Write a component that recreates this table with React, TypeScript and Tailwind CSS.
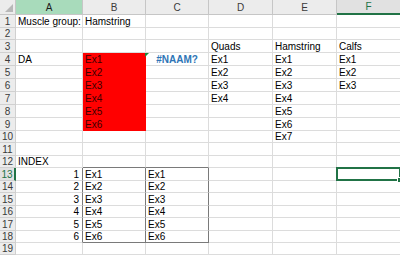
import React from "react";

const COLS = ["A", "B", "C", "D", "E", "F"];
const ROW_COUNT = 19;

type Cell = { text: string; align?: "right" | "center"; tone?: "red" | "error" };

const sheet: Record<string, Cell> = {
  A1: { text: "Muscle group:" },
  B1: { text: "Hamstring" },
  D3: { text: "Quads" },
  E3: { text: "Hamstring" },
  F3: { text: "Calfs" },
  A4: { text: "DA" },
  C4: { text: "#NAAM?", align: "center", tone: "error" },
  A12: { text: "INDEX" },
};

const fillList = (col: string, start: number, count: number, tone?: "red") => {
  for (let i = 0; i < count; i++) {
    sheet[`${col}${start + i}`] = { text: `Ex${i + 1}`, tone };
  }
};

fillList("B", 4, 6, "red");
fillList("D", 4, 4);
fillList("E", 4, 7);
fillList("F", 4, 3);
fillList("B", 13, 6);
fillList("C", 13, 6);
for (let i = 0; i < 6; i++) sheet[`A${13 + i}`] = { text: String(i + 1), align: "right" };

const inBox = (col: string, row: number) => (col === "B" || col === "C") && row >= 13 && row <= 18;

function ColHeader({ col }: { col: string }) {
  if (col === "A") {
    return (
      <div className="flex items-center justify-center border-r border-b border-[#c6c6c6] bg-[#a8dbbb] text-[10px] text-[#1d1d1d]">
        A
      </div>
    );
  }
  if (col === "F") {
    return (
      <div className="flex items-center justify-center border-r border-b-2 border-r-[#c6c6c6] border-b-[#217346] bg-[#e1e1e1] text-[10px] text-[#217346]">
        F
      </div>
    );
  }
  return (
    <div className="flex items-center justify-center border-r border-b border-[#c6c6c6] bg-[#ececec] text-[10px] text-[#3a3a3a]">
      {col}
    </div>
  );
}

function RowHeader({ row }: { row: number }) {
  if (row === 13) {
    return (
      <div className="flex items-center justify-center border-b border-r-2 border-b-[#d0d0d0] border-r-[#217346] bg-[#e1e1e1] text-[10px] text-[#217346]">
        {row}
      </div>
    );
  }
  return (
    <div className="flex items-center justify-center border-r border-b border-[#d0d0d0] bg-[#ececec] text-[10px] text-[#3a3a3a]">
      {row}
    </div>
  );
}

function SheetCell({ col, row }: { col: string; row: number }) {
  const cell = sheet[`${col}${row}`];
  const red = cell?.tone === "red";
  const error = cell?.tone === "error";
  const darkRight = (col === "A" && row >= 13 && row <= 18) || inBox(col, row);
  const darkBottom = (col === "B" || col === "C") && (row === 12 || row === 18);

  let tone = "border-[#dcdcdc] text-black";
  if (red) tone = "border-[#ff0000] bg-[#ff0000] text-[#3a0000]";
  if (error) tone = "border-[#dcdcdc] font-bold text-[#2e75b6]";

  return (
    <div
      className={[
        "relative flex items-end whitespace-nowrap border-r border-b px-[2px] pb-0 text-[10px] leading-[12px]",
        tone,
        darkRight ? "border-r-[#7a7a7a]" : "",
        darkBottom ? "border-b-[#7a7a7a]" : "",
        cell?.align === "right" ? "justify-end pr-[3px]" : "",
        cell?.align === "center" ? "justify-center" : "",
      ].join(" ")}
    >
      {error && (
        <span className="absolute top-0 -left-px h-0 w-0 border-t-[4px] border-r-[4px] border-t-[#1e8a3c] border-r-transparent" />
      )}
      {cell && <span className="translate-y-[1px]">{cell.text}</span>}
      {col === "F" && row === 13 && (
        <span className="absolute -top-px -left-px -right-px -bottom-px border-2 border-[#217346]">
          <span className="absolute -right-[4px] -bottom-[4px] h-[6px] w-[6px] border border-white bg-[#217346]" />
        </span>
      )}
    </div>
  );
}

export default function App() {
  const rows = Array.from({ length: ROW_COUNT }, (_, i) => i + 1);

  return (
    <div className="h-[255px] w-[400px] overflow-hidden bg-white font-['Liberation_Sans',Arial,sans-serif]">
      <div className="grid w-[401px] grid-cols-[16px_67px_63px_63px_64px_64px_64px] grid-rows-[15px_13px_12px_13px_13px_13px_13px_13px_13px_13px_12px_13px_12px_13px_12px_13px_12px_13px_12px_12px]">
        {/* corner with select-all triangle */}
        <div className="relative border-r border-b border-[#c6c6c6] bg-[#ececec]">
          <span className="absolute right-[2px] bottom-[2px] h-0 w-0 border-b-[8px] border-l-[8px] border-b-[#b8b8b8] border-l-transparent" />
        </div>
        {COLS.map((c) => (
          <ColHeader key={c} col={c} />
        ))}

        {rows.map((r) => (
          <React.Fragment key={r}>
            <RowHeader row={r} />
            {COLS.map((c) => (
              <SheetCell key={c} col={c} row={r} />
            ))}
          </React.Fragment>
        ))}
      </div>
    </div>
  );
}
